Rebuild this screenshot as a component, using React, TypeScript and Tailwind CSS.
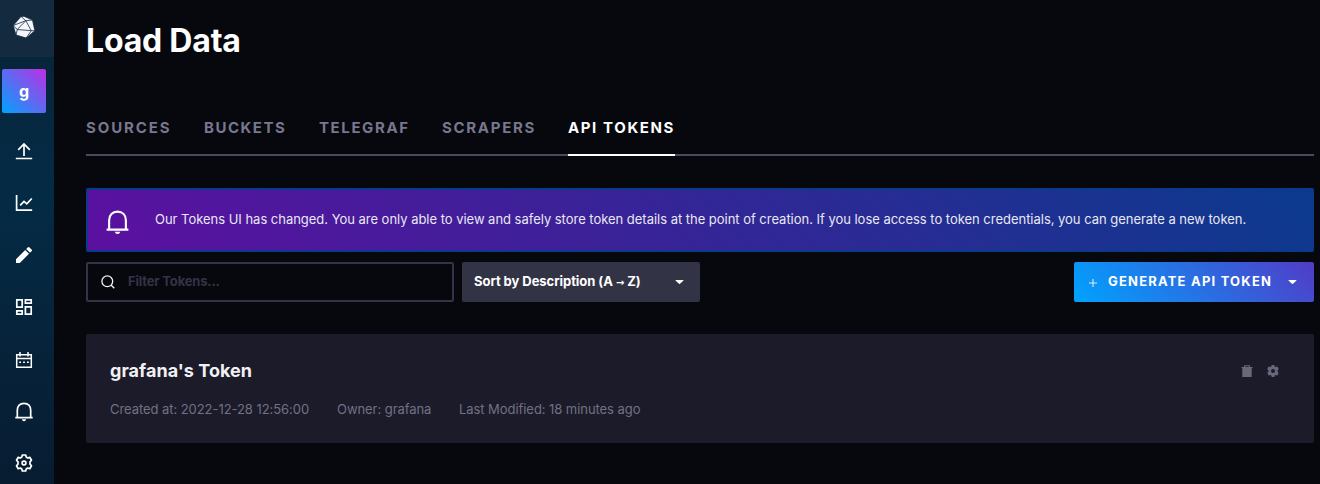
import React from "react";

type IconProps = { className?: string };

const Logo = () => (
  <svg width="23" height="24" viewBox="0 0 23 24" fill="#f4f6fb" stroke="#142a3f" strokeWidth="0.8" strokeLinejoin="round">
    <path d="M8 .5 11 .3 19.500 4 21.900 14.700 13.200 22 3 19 .200 9.500Z" />
    <path d="M.200 9.500 12.800 4.700 19.500 4M8 .5 12.800 4.700 4.300 13.500 .200 9.500M12.800 4.700 18.300 14.700 4.300 13.500 3 19M18.300 14.700 21.900 14.700M18.300 14.700 13.200 22" fill="none" />
  </svg>
);

const Upload = () => (
  <svg width="18" height="18" viewBox="0 0 18 18" fill="none" stroke="#fff" strokeWidth="1.7">
    <path d="M.8 16.5H17.2M9 14V2M3.2 7.8 9 2l5.8 5.8" />
  </svg>
);

const Graph = () => (
  <svg width="18" height="18" viewBox="0 0 18 18" fill="none" stroke="#fff" strokeWidth="1.7">
    <path d="M1.6 1v15.200H17.2M5.2 11.400 9 7.400l2.8 2.500 5-5.400" />
  </svg>
);

const Pencil = () => (
  <svg width="18" height="18" viewBox="0 0 18 18" fill="#fff">
    <path d="M1 13.2 10.2 4 14 7.8 4.8 17H1ZM11.2 3 13 1.2q.6-.5 1.2 0L16.8 3.800q.5.6 0 1.200L15 6.800Z" />
  </svg>
);

const Boards = () => (
  <svg width="18" height="18" viewBox="0 0 18 18" fill="none" stroke="#fff" strokeWidth="1.7">
    <path d="M1.800 1.800h5.400v7.400H1.800ZM10.400 1.800h5.800v3.400h-5.800ZM1.800 12.800h5.400v3.400H1.800ZM10.400 8.800h5.800v7.400h-5.800Z" />
  </svg>
);

const Calendar = () => (
  <svg className="mt-px" width="18" height="18" viewBox="0 0 18 18" fill="none" stroke="#fff" strokeWidth="1.500">
    <path d="M1.700 3.700H16.300V16.300H1.700ZM1.700 7.500H16.300M5 1V5.500M13 1V5.500" />
    <path d="M4.200 11.200h1.800M8.100 11.200h1.800M12 11.200h1.800" />
  </svg>
);

const Bell = ({ className = "" }: IconProps) => (
  <svg className={className} viewBox="0 0 18 20" fill="none" stroke="#fff" strokeWidth="1.700">
    <path d="M.300 15.700H17.700M2.300 15.700V8.200C2.300 4 5 1.300 9 1.300S15.700 4 15.700 8.200v7.500" />
    <path d="M6.800 17.300h4.400Q10.800 19.200 9 19.200T6.800 17.300Z" fill="#fff" stroke="none" />
  </svg>
);

const Gear = () => (
  <svg width="18" height="18" viewBox="0 0 18 18" fill="none" stroke="#fff" strokeWidth="1.700" strokeLinejoin="round">
    <path d="M7.300 1h3.400l.5 2.100 1.500.9 2.100-.7 1.700 2.900L15 7.900v2.200l1.500 1.700-1.700 2.900-2.100-.7-1.500.9-.5 2.100H7.300l-.5-2.100-1.500-.9-2.100.7-1.700-2.900L3 10.100V7.900L1.500 6.200l1.700-2.900 2.100.7 1.500-.9Z" />
    <circle cx="9" cy="9" r="1.900" />
  </svg>
);

const Search = () => (
  <svg width="14" height="14" viewBox="0 0 14 14" fill="none" stroke="#f1f1f3" strokeWidth="1.300">
    <circle cx="6.300" cy="6.300" r="5.400" />
    <path d="m10.200 10.200 3.100 3.100" />
  </svg>
);

const Caret = () => (
  <svg width="9" height="5" viewBox="0 0 9 5" fill="#fff">
    <path d="M.8 0h7.400q.500.200.1.700L5 3.800q-.5.400-1 0L.7.700Q.3.200.8 0Z" />
  </svg>
);

const Trash = () => (
  <svg width="12" height="12" viewBox="0 0 12 12" fill="#68687b">
    <path fillRule="evenodd" d="M3 2V.2h6V2h2.500v1.200H.5V2ZM4.200 2h3.600v-.7H4.200ZM1.300 3.200h9.400V12H1.300Z" />
  </svg>
);

const SmallGear = () => (
  <svg width="12" height="12" viewBox="0 0 12 12" fill="#68687b" fillRule="evenodd">
    <path d="M4.700 0h2.600l.4 1.500.9.500 1.700-.5L11.700 4l-1.100 1.200v1.600L11.700 8l-1.400 2.500-1.700-.5-.9.500L7.300 12H4.700l-.4-1.500-.9-.5-1.700.5L.3 8l1.100-1.200V5.200L.3 4l1.400-2.500 1.700.5.900-.5ZM6 4a2 2 0 1 0 0 4 2 2 0 0 0 0-4Z" />
  </svg>
);

const navItems = [
  <Upload />,
  <Graph />,
  <Pencil />,
  <Boards />,
  <Calendar />,
  <Bell className="mt-px h-5 w-[18px]" />,
  <Gear />,
];

const tabs = [
  { label: "SOURCES", box: "w-[85px] mr-[33px] tracking-[1.900px]" },
  { label: "BUCKETS", box: "w-[82px] mr-[33px] tracking-[1.5px]" },
  { label: "TELEGRAF", box: "w-[91px] mr-8 tracking-[1.600px]" },
  { label: "SCRAPERS", box: "w-[94px] mr-8 tracking-[1.700px]" },
  { label: "API TOKENS", box: "w-[107px] tracking-[1.600px]", active: true },
];

export default function App() {
  return (
    <div className="flex h-[484px] w-[1320px] overflow-hidden whitespace-nowrap bg-[#07070e] font-['Inter',sans-serif] text-white">
      <aside className="flex w-[54px] shrink-0 flex-col bg-linear-to-b from-[#072337] via-[#042b45] via-40% to-[#071c31]">
        <div className="flex h-[57px] shrink-0 items-start bg-[#142a3f] pt-[16px] pl-[13px]">
          <Logo />
        </div>
        <div className="mt-3 ml-0.5 flex size-11 shrink-0 items-center justify-center rounded-[2px] bg-[linear-gradient(45deg,#00a3ff,#be2ee4)] text-[16px] font-bold">
          g
        </div>
        <nav className="mt-3 flex w-12 shrink-0 flex-col">
          {navItems.map((icon, i) => (
            <a key={i} className="flex h-[52px] items-center justify-center">
              {icon}
            </a>
          ))}
        </nav>
      </aside>

      <main className="flex flex-1 flex-col pr-1.5 pl-8">
        <h1 className="mt-[21px] h-[39px] text-[32px] leading-10 font-bold tracking-[-0.200px]">Load Data</h1>

        <div className="mt-10 flex h-14 border-b-2 border-[#4a4a5e] text-[15px] leading-[56px] font-bold text-[#77778d]">
          {tabs.map((t) => (
            <div key={t.label} className={`h-14 ${t.box} ${t.active ? "border-b-2 border-white text-white" : ""}`}>
              {t.label}
            </div>
          ))}
        </div>

        <div className="mt-8 flex h-16 shrink-0 items-center rounded-[2px] border-2 border-[#0b3a8d] bg-[linear-gradient(45deg,#5c10a0,#0b3a8d)] pl-[18px]">
          <Bell className="mt-1 h-[25px] w-[23px]" />
          <p className="ml-[26px] text-[13px] tracking-[-0.025px] text-[#e8e8f4]">
            Our Tokens UI has changed. You are only able to view and safely store token details at the point of creation. If you lose access to token credentials, you can generate a new token.
          </p>
        </div>

        <div className="mt-2.5 flex h-10 shrink-0 text-[13px] font-bold">
          <div className="flex w-[368px] items-center rounded-[2px] border-2 border-[#333346] pl-[13px]">
            <Search />
            <span className="ml-[13px] tracking-[-0.180px] text-[#333346]">Filter Tokens...</span>
          </div>
          <button className="ml-2 flex w-[238px] items-center justify-between rounded-[2px] bg-[#333346] pr-4 pl-3">
            <span className="tracking-[-0.050px]">
              Sort by Description (A <span className="font-['DejaVu_Sans',sans-serif] text-[10px] font-bold">→</span> Z)
            </span>
            <Caret />
          </button>
          <button className="ml-auto flex w-60 items-center rounded-[2px] bg-[linear-gradient(45deg,#00a3ff,#513cc6)] pl-[15px]">
            <svg className="mt-0.5" width="8" height="8" viewBox="0 0 8 8" stroke="#d8edff" strokeWidth="1.100">
              <path d="M0 4h8M4 0v8" />
            </svg>
            <span className="ml-[11px] w-[163px] text-left tracking-[1.200px]">GENERATE API TOKEN</span>
            <span className="ml-[17px]">
              <Caret />
            </span>
          </button>
        </div>

        <section className="mt-8 flex h-[109px] shrink-0 justify-between rounded-[2px] bg-[#1c1b2a] pr-[35px] pl-6">
          <div className="pt-[25px]">
            <h2 className="text-[18px] leading-6 font-bold tracking-[0.050px] text-[#f1f1f3]">grafana's Token</h2>
            <div className="mt-[17px] flex text-[13px] leading-[18px] tracking-[-0.060px] text-[#717185]">
              <span className="w-[227px]">Created at: 2022-12-28 12:56:00</span>
              <span className="w-[122px]">Owner: grafana</span>
              <span>Last Modified: 18 minutes ago</span>
            </div>
          </div>
          <div className="flex gap-3.5 pt-[31px]">
            <Trash />
            <SmallGear />
          </div>
        </section>
      </main>
    </div>
  );
}
